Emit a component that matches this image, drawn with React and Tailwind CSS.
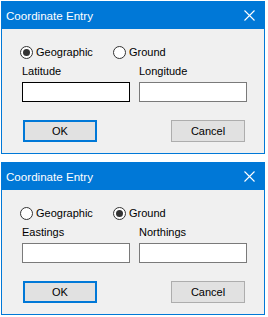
import React from "react";

function Radio({ checked, label }) {
  return (
    <div className="flex items-center h-[13px]">
      <div className="w-[13px] h-[13px] rounded-full border border-[#333333] bg-white flex items-center justify-center">
        {checked && <div className="w-[7px] h-[7px] rounded-full bg-[#333333]" />}
      </div>
      <span className="ml-[3px] leading-[13px]">{label}</span>
    </div>
  );
}

function Dialog({ geographic, labels, focusFirst }) {
  return (
    <div className="w-[264px] h-[153px] border border-[#0078d7] bg-[#f0f0f0] flex flex-col">
      <div className="h-[27px] bg-[#0078d7] flex items-center justify-between pl-[4px] pr-[9px]">
        <span className="text-white text-[11.6px] leading-none">Coordinate Entry</span>
        <svg width="11" height="11" viewBox="0 0 11 11">
          <path d="M0.5 0.5 L10.5 10.5 M10.5 0.5 L0.5 10.5" stroke="white" strokeWidth="1.1" fill="none" />
        </svg>
      </div>
      <div className="flex-1 pt-[17px] text-[11px] text-black">
        <div className="flex pl-[18px]">
          <div className="w-[93px]">
            <Radio checked={geographic} label="Geographic" />
          </div>
          <Radio checked={!geographic} label="Ground" />
        </div>
        <div className="flex pl-[20px] mt-[6px]">
          <div className="w-[117px] leading-[13px]">{labels[0]}</div>
          <div className="leading-[13px]">{labels[1]}</div>
        </div>
        <div className="flex pl-[20px] mt-[4px]">
          <div
            className={
              "w-[108px] h-[20px] bg-white border " +
              (focusFirst ? "border-[#000000]" : "border-[#7a7a7a]")
            }
          />
          <div className="w-[108px] h-[20px] bg-white border border-[#7a7a7a] ml-[9px]" />
        </div>
        <div className="flex pl-[21px] mt-[18px]">
          <div className="w-[74px] h-[22px] border-2 border-[#0078d7] bg-[#e1e1e1] flex items-center justify-center">
            OK
          </div>
          <div className="w-[74px] h-[22px] border border-[#adadad] bg-[#e1e1e1] flex items-center justify-center ml-[74px]">
            Cancel
          </div>
        </div>
      </div>
    </div>
  );
}

export default function App() {
  return (
    <div
      className="w-[268px] h-[317px] bg-white pt-[1px] pl-[1px] flex flex-col gap-[8px]"
      style={{ fontFamily: '"Liberation Sans", Arial, sans-serif' }}
    >
      <Dialog geographic={true} labels={["Latitude", "Longitude"]} focusFirst={true} />
      <Dialog geographic={false} labels={["Eastings", "Northings"]} focusFirst={false} />
    </div>
  );
}
